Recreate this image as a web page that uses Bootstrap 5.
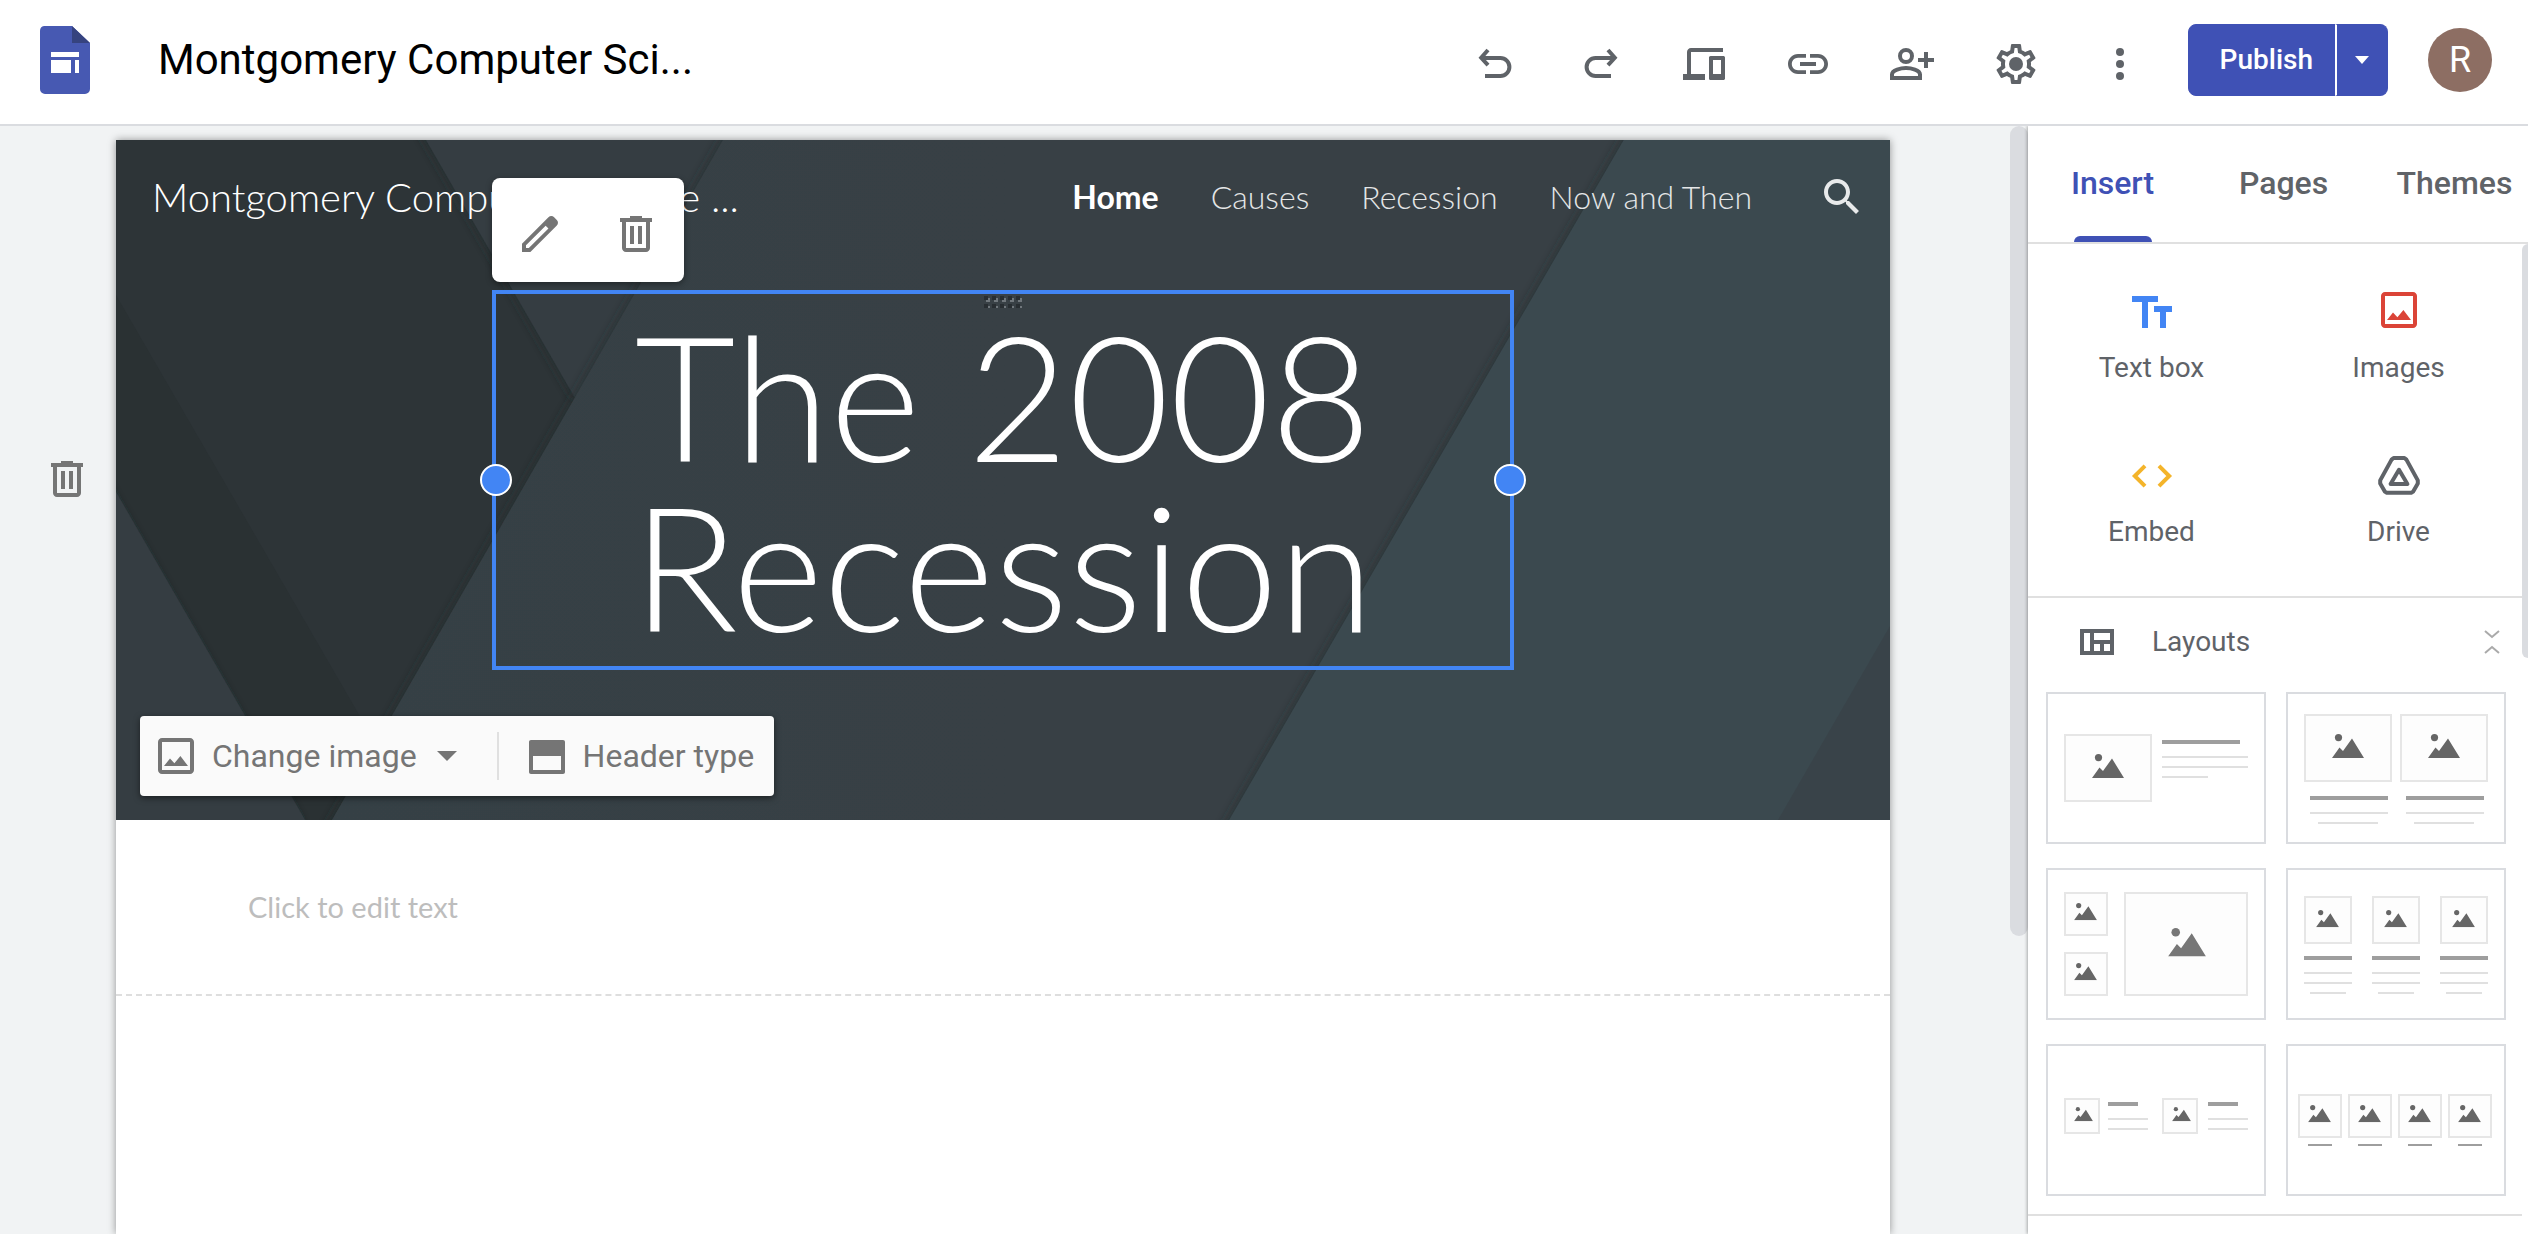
<!DOCTYPE html>
<html lang="en">
<head>
<meta charset="utf-8">
<meta name="viewport" content="width=device-width, initial-scale=1">
<title>Montgomery Computer Science - Site editor</title>
<link href="https://cdn.jsdelivr.net/npm/bootstrap@5.3.0/dist/css/bootstrap.min.css" rel="stylesheet">
<style>
  :root { --ink: #5f6368; --brand: #3f51b5; --line: #dadce0; --pick: #4285f4; }
  body { font-family: Roboto, "Liberation Sans", sans-serif; color: var(--ink); background: #f1f3f4; }
  .plain-btn { border: 0; background: none; padding: 0; color: inherit; display: inline-flex; align-items: center; justify-content: center; }
  .ico { width: 48px; height: 48px; fill: currentColor; flex: none; display: block; }
  .ico .ln, .ln { fill: none; stroke: currentColor; stroke-width: 2; }
  .tint-blue { color: #4285f4; } .tint-red { color: #db4437; } .tint-amber { color: #f4b42a; } .tint-grey { color: #aaa; } .tint-light { color: #e8eaeb; }

  .app-bar { height: 126px; background: #fff; border-bottom: 2px solid var(--line); padding: 0 36px 4px 40px; }
  .app-logo { width: 50px; height: 68px; display: block; }
  .doc-name { font-size: 42px; line-height: 48px; color: #000; margin-left: 68px; }
  .app-tools { gap: 56px; margin-right: 44px; padding-top: 8px; }
  .publish .btn { --bs-btn-bg: #3f51b5; --bs-btn-border-color: #3f51b5; --bs-btn-color: #fff; --bs-btn-border-radius: 8px; height: 72px; font-size: 28px; font-weight: 500; line-height: 32px; padding: 0 22px 0 31px; }
  .publish .btn + .btn { padding: 0 18px; border-left: 2px solid #fff; }
  .avatar { width: 64px; height: 64px; background: #8d6e63; color: #fff; font-size: 36px; line-height: 64px; margin-left: 40px; }

  .gutter-left { width: 116px; padding: 329px 25px 0 0; color: #757575; text-align: right; }
  .gutter-right { width: 120px; }
  .site-page { background: #fff; margin-top: 14px; box-shadow: 0 0 8px rgba(0,0,0,.4); font-family: Lato, "Liberation Sans", sans-serif; }
  .rail { width: 18px; }
  .rail-thumb { height: 810px; border-radius: 9px; background: var(--line); }

  .hero { color: #fff; height: 680px; background: #2d3437; }
  .hero-art { position: absolute; inset: 0; width: 100%; height: 100%; }
  .hero-nav { height: 114px; padding: 0 24px 0 36px; }
  .site-name { font-size: 40px; font-weight: 300; line-height: 48px; }
  .hero-links { gap: 52px; margin-right: 66px; font-size: 32px; font-weight: 300; line-height: 40px; }
  .hero-links a { color: #e4e6e7; text-decoration: none; }
  .hero-links a.current { color: #fff; font-weight: 700; }
  .picked { width: 1022px; max-width: 100%; margin: 36px auto 0; border: 4px solid var(--pick); padding: 16px 40px; }
  .picked h1 { font-size: 174px; line-height: 170px; font-weight: 300; }
  .knob { position: absolute; top: 50%; width: 32px; height: 32px; border-radius: 50%; background: var(--pick); border: 2px solid #fff; transform: translate(-50%,-50%); }
  .knob-l { left: 0; } .knob-r { left: 100%; }
  .grip { position: absolute; top: 2px; left: 50%; width: 38px; height: 12px; transform: translateX(-50%); }
  .float-tools { position: absolute; left: -4px; bottom: calc(100% + 12px); width: 192px; height: 104px; padding-top: 8px; background: #fff; border-radius: 8px; color: #757575; box-shadow: 0 2px 6px rgba(0,0,0,.4); }
  .hero-tools { position: absolute; left: 24px; bottom: 24px; height: 80px; background: #fafafa; border-radius: 4px; color: #757575; box-shadow: 0 2px 6px rgba(0,0,0,.5); padding: 0 20px 0 12px; font-family: Roboto, sans-serif; font-size: 32px; line-height: 40px; }
  .hero-tools .vr-line { width: 2px; height: 48px; background: #e0e0e0; margin: 0 24px 0 40px; }
  .hero-tools .gap-txt { gap: 12px; }
  .text-slot { height: 176px; border-bottom: 2px dashed #dedede; padding-left: 132px; font-size: 29px; line-height: 40px; color: #bdbdbd; }

  .side { width: 500px; background: #fff; box-shadow: -1px 0 3px rgba(0,0,0,.3); }
  .side-tabs { height: 118px; border-bottom: 2px solid #e0e0e0; }
  .side-tabs .nav-link { width: 171px; padding: 0 2px 2px 0; color: var(--ink); font-size: 32px; font-weight: 500; line-height: 40px; border-radius: 0; display: flex; align-items: center; justify-content: center; position: relative; flex: none; }
  .side-tabs .nav-link.active { color: var(--brand); }
  .side-tabs .nav-link.active::after { content: ""; position: absolute; bottom: 0; left: 46px; right: 47px; height: 6px; background: var(--brand); border-radius: 6px 6px 0 0; }
  .side-thumb { position: absolute; right: 0; top: 0; width: 6px; height: 414px; border-radius: 6px 0 0 6px; background: var(--line); }
  .side-scroll { padding-right: 6px; }
  .insert-grid { padding: 14px 0 10px; border-bottom: 2px solid #e0e0e0; }
  .insert-item { height: 164px; padding-top: 30px; flex-direction: column; justify-content: flex-start; gap: 12px; font-size: 28px; line-height: 40px; width: 100%; }
  .layouts-head { height: 88px; padding: 0 22px 0 52px; font-size: 28px; line-height: 40px; width: 100%; }
  .layouts-head .head-text { margin-left: 38px; }
  .layout-grid { display: grid; grid-template-columns: 1fr 1fr; gap: 24px 20px; padding: 6px 16px 18px 18px; border-bottom: 2px solid #e0e0e0; }
  .layout-grid svg { display: block; width: 100%; height: 152px; }
  .frm { fill: #fdfdfd; stroke: #e6e6e6; stroke-width: 2; }
  .bar { fill: #9e9e9e; } .thin { fill: #e0e0e0; }
</style>
</head>
<body>
<svg width="0" height="0" class="position-absolute" aria-hidden="true">
  <symbol id="trash" viewBox="0 0 24 24"><path d="M15 4V3H9v1H4v2h1v13c0 1.100.9 2 2 2h10c1.100 0 2-.9 2-2V6h1V4h-5zm2 15H7V6h10v13zM9 8h2v9H9zm4 0h2v9h-2z"/></symbol>
  <symbol id="pic" viewBox="0 0 24 24"><path d="M19 5v14H5V5h14m0-2H5c-1.100 0-2 .9-2 2v14c0 1.100.9 2 2 2h14c1.100 0 2-.9 2-2V5c0-1.100-.9-2-2-2z"/><path d="M6 17l3-3.800 2.200 2.400L14.200 12 18 17z"/></symbol>
  <symbol id="hill" viewBox="0 0 32 24"><circle cx="6.500" cy="3.600" r="3.600"/><path d="M0 24l7.500-10.500L11 17l9-12.500L32 24z"/></symbol>
</svg>

<div class="d-flex flex-column vh-100 overflow-hidden">
  <header class="app-bar d-flex align-items-center">
    <a href="#" aria-label="Sites home"><svg class="app-logo" viewBox="0 0 50 68"><path fill="#4759b2" d="M4 0h28l18 17v46a5 5 0 0 1-5 5H5a5 5 0 0 1-5-5V5a5 5 0 0 1 4-5z"/><path fill="#36437f" d="M32 0l18 17H32z"/><path fill="#fff" d="M11 26h28v5H11zM11 34h20v13H11zM35 34h4v13h-4z"/></svg></a>
    <div class="doc-name text-nowrap me-auto">Montgomery Computer Sci...</div>
    <div class="app-tools d-flex">
      <button class="plain-btn" aria-label="Undo"><svg class="ico" viewBox="0 0 24 24"><path class="ln" d="M8 5L4.600 8.900 8 12.600M5 9h9.200a4.500 4.500 0 0 1 0 9H6.500"/></svg></button>
      <button class="plain-btn" aria-label="Redo"><svg class="ico" viewBox="0 0 24 24"><path class="ln" d="M16 5l3.400 3.900L16 12.600M19 9H9.800a4.500 4.500 0 0 0 0 9h7.700"/></svg></button>
      <button class="plain-btn" aria-label="Preview"><svg class="ico" viewBox="0 0 24 24"><path fill-rule="evenodd" d="M5.500 6h16V4h-16c-1.100 0-2 .9-2 2v11h-2v3h11v-3h-7zM21.700 8h-6.400c-.5 0-.8.4-.8.8v10.400c0 .5.400.8.8.8h6.400c.5 0 .8-.4.8-.8V8.800c0-.5-.4-.8-.8-.8zm-1.200 9h-4v-7h4z"/></svg></button>
      <button class="plain-btn" aria-label="Copy link"><svg class="ico" viewBox="0 0 24 24"><path d="M3.900 12c0-1.710 1.390-3.100 3.100-3.100h4V7H7c-2.760 0-5 2.240-5 5s2.240 5 5 5h4v-1.900H7c-1.710 0-3.100-1.390-3.100-3.100zM8 13h8v-2H8v2zm9-6h-4v1.900h4c1.710 0 3.100 1.390 3.100 3.100s-1.390 3.100-3.100 3.100h-4V17h4c2.760 0 5-2.240 5-5s-2.240-5-5-5z"/></svg></button>
      <button class="plain-btn" aria-label="Share"><svg class="ico" viewBox="0 0 24 24"><circle class="ln" cx="9" cy="8" r="3"/><path class="ln" d="M2 19v-1.800C2 15 6.500 14 9 14s7 1 7 3.200V19zM19 6v8M15 10h8"/></svg></button>
      <button class="plain-btn" aria-label="Settings"><svg class="ico" viewBox="0 0 24 24"><path d="M19.430 12.980c.04-.32.07-.64.07-.98 0-.34-.03-.66-.07-.98l2.110-1.650c.19-.15.24-.42.12-.64l-2-3.460c-.09-.16-.26-.25-.44-.25-.06 0-.12.010-.17.030l-2.490 1c-.52-.4-1.080-.73-1.690-.98l-.38-2.650C14.460 2.180 14.250 2 14 2h-4c-.25 0-.46.18-.49.42l-.38 2.650c-.61.25-1.170.59-1.690.98l-2.490-1c-.06-.02-.12-.03-.18-.03-.17 0-.34.09-.43.25l-2 3.460c-.13.22-.07.49.12.64l2.110 1.650c-.04.32-.07.65-.07.98 0 .33.030.66.070.98l-2.110 1.650c-.19.15-.24.42-.12.64l2 3.460c.09.16.26.25.44.25.06 0 .12-.01.17-.03l2.490-1c.52.4 1.080.73 1.690.98l.38 2.650c.03.24.24.42.49.42h4c.25 0 .46-.18.49-.42l.38-2.650c.61-.25 1.170-.59 1.690-.98l2.490 1c.06.02.12.03.18.03.17 0 .34-.09.43-.25l2-3.460c.12-.22.07-.49-.12-.64l-2.110-1.650zm-1.980-1.710c.04.31.05.52.05.73 0 .21-.02.43-.05.73l-.14 1.130.89.7 1.080.84-.7 1.210-1.270-.51-1.040-.42-.9.68c-.43.32-.84.56-1.250.73l-1.060.43-.16 1.130-.2 1.350h-1.400l-.19-1.350-.16-1.130-1.060-.43c-.43-.18-.83-.41-1.230-.71l-.91-.7-1.060.43-1.270.51-.7-1.210 1.080-.84.89-.7-.14-1.130c-.03-.31-.05-.54-.05-.74s.02-.43.05-.73l.14-1.130-.89-.7-1.080-.84.7-1.210 1.270.51 1.040.42.9-.68c.43-.32.84-.56 1.250-.73l1.060-.43.16-1.130.2-1.350h1.390l.19 1.350.16 1.130 1.060.43c.43.18.83.41 1.230.71l.91.7 1.060-.43 1.270-.51.7 1.210-1.070.85-.89.7.14 1.130z"/><circle cx="12" cy="12" r="3.500"/></svg></button>
      <button class="plain-btn" aria-label="More"><svg class="ico" viewBox="0 0 24 24"><circle cx="12" cy="6" r="2"/><circle cx="12" cy="12" r="2"/><circle cx="12" cy="18" r="2"/></svg></button>
    </div>
    <div class="btn-group publish">
      <button class="btn">Publish</button>
      <button class="btn" aria-label="Publish options"><svg width="14" height="8" viewBox="0 0 14 8" class="d-block"><path fill="#fff" d="M0 0h14L7 8z"/></svg></button>
    </div>
    <button class="plain-btn avatar rounded-circle" aria-label="Account">R</button>
  </header>

  <div class="d-flex flex-grow-1 overflow-hidden">
    <div class="gutter-left flex-shrink-0"><button class="plain-btn" aria-label="Delete section"><svg class="ico"><use href="#trash"/></svg></button></div>
    <main class="site-page flex-grow-1">
      <section class="hero position-relative">
        <svg class="hero-art" viewBox="0 0 1774 680" preserveAspectRatio="none" aria-hidden="true">
          <defs><filter id="sh" x="-10%" y="-10%" width="120%" height="120%"><feDropShadow dx="-3" dy="0" stdDeviation="5" flood-color="#202528" flood-opacity=".5"/></filter>
          <linearGradient id="mid" x1="0" x2="1"><stop offset="0" stop-color="#363f44"/><stop offset="1" stop-color="#383f45"/></linearGradient></defs>
          <path fill="#2a3133" d="M0 155L260 604 216 680H189L0 352z"/>
          <path fill="#343c42" filter="url(#sh)" d="M-40 283L0 352 189 680V720H-40z"/>
          <path fill="#343c42" filter="url(#sh)" d="M287-40L310 0 459 258 640 260 700-40z"/>
          <path fill="url(#mid)" filter="url(#sh)" d="M630-40L193 720H1300L1600-40z"/>
          <path fill="#3b4950" filter="url(#sh)" d="M1531-40L1090 720H1900V-40z"/>
          <path fill="#394349" d="M1774 486L1662 680H1774z"/>
        </svg>
        <nav class="hero-nav position-relative d-flex align-items-center" aria-label="Site">
          <div class="site-name text-nowrap me-auto">Montgomery Computer Science ...</div>
          <div class="hero-links d-flex text-nowrap"><a class="current" href="#">Home</a><a href="#">Causes</a><a href="#">Recession</a><a href="#">Now and Then</a></div>
          <button class="plain-btn tint-light" aria-label="Search"><svg class="ico" viewBox="0 0 24 24"><path d="M15.500 14h-.79l-.28-.27C15.410 12.590 16 11.110 16 9.500 16 5.910 13.090 3 9.500 3S3 5.910 3 9.500 5.910 16 9.500 16c1.610 0 3.090-.59 4.230-1.570l.27.28v.79l5 4.990L20.490 19l-4.990-5zm-6 0C7.010 14 5 11.990 5 9.500S7.010 5 9.500 5 14 7.010 14 9.500 11.990 14 9.500 14z"/></svg></button>
        </nav>
        <div class="picked position-relative">
          <svg class="grip" viewBox="0 0 38 12" aria-hidden="true"><defs><pattern id="gp" width="8" height="8" patternUnits="userSpaceOnUse"><path fill="#70777c" d="M2 2h4v4H2z"/><path fill="#282e32" d="M0 0h4v4H0z"/></pattern></defs><path fill="url(#gp)" d="M0 0h38v12H0z"/></svg>
          <h1 class="text-center m-0">The 2008<br>Recession</h1>
          <span class="knob knob-l"></span><span class="knob knob-r"></span>
          <div class="float-tools d-flex align-items-center justify-content-around">
            <button class="plain-btn" aria-label="Edit"><svg class="ico" viewBox="0 0 24 24"><path d="M20.410 4.940l-1.350-1.350c-.78-.78-2.050-.78-2.830 0L3 16.820V21h4.180L20.410 7.770c.79-.78.79-2.050 0-2.830zm-14 14.120L5 19v-1.360l9.820-9.820 1.410 1.410-9.820 9.830z"/></svg></button>
            <button class="plain-btn" aria-label="Delete"><svg class="ico"><use href="#trash"/></svg></button>
          </div>
        </div>
        <div class="hero-tools d-flex align-items-center text-nowrap">
          <button class="plain-btn gap-txt"><svg class="ico"><use href="#pic"/></svg>Change image<svg class="ms-2" width="20" height="10" viewBox="0 0 20 10" fill="currentColor"><path d="M0 0h20L10 10z"/></svg></button>
          <span class="vr-line"></span>
          <button class="plain-btn gap-txt"><svg class="ico" viewBox="0 0 24 24"><path fill-rule="evenodd" d="M4 4h16c.6 0 1 .4 1 1v15c0 .6-.4 1-1 1H4c-.6 0-1-.4-1-1V5c0-.6.400-1 1-1zM5 12v7h14v-7z"/></svg>Header type</button>
        </div>
      </section>
      <section class="text-slot d-flex align-items-center">Click to edit text</section>
    </main>
    <div class="gutter-right flex-shrink-0"></div>
    <div class="rail flex-shrink-0"><div class="rail-thumb"></div></div>

    <aside class="side flex-shrink-0 d-flex flex-column position-relative">
      <nav class="side-tabs nav flex-nowrap overflow-hidden flex-shrink-0">
        <a class="nav-link active" href="#">Insert</a><a class="nav-link" href="#">Pages</a><a class="nav-link" href="#">Themes</a>
      </nav>
      <div class="side-scroll position-relative">
        <div class="side-thumb"></div>
        <div class="insert-grid row g-0">
          <div class="col-6"><button class="plain-btn insert-item"><svg class="ico tint-blue" viewBox="0 0 24 24"><path d="M2 4h13v3h-5v13H7V7H2zM13 9h9v3h-3v8h-3v-8h-3z"/></svg>Text box</button></div>
          <div class="col-6"><button class="plain-btn insert-item"><svg class="ico tint-red" viewBox="0 1 24 24"><use href="#pic" width="24" height="24"/></svg>Images</button></div>
          <div class="col-6"><button class="plain-btn insert-item"><svg class="ico tint-amber" viewBox="0 0 24 24"><path class="ln" d="M8.500 6.900L3.400 12l5.100 5.100M15.500 6.900l5.100 5.100-5.100 5.100"/></svg>Embed</button></div>
          <div class="col-6"><button class="plain-btn insert-item"><svg class="ico" viewBox="0 0 24 24"><path class="ln" stroke-linejoin="round" d="M9.300 3h5.400l1 .8 5.700 10.400v1.600l-2.300 4-1 .6H5.900l-1-.6-2.300-4v-1.600L8.300 3.800zM12 8.900L16.200 16H7.800z"/></svg>Drive</button></div>
        </div>
        <button class="plain-btn layouts-head justify-content-start">
          <svg width="34" height="26" viewBox="0 0 34 26" fill="currentColor"><path fill-rule="evenodd" d="M0 0h34v26H0zM4 4v18h6V4zM14 4v7h16V4zM14 15v7h6v-7zM24 15v7h6v-7z"/></svg>
          <span class="head-text me-auto">Layouts</span>
          <svg class="tint-grey" width="16" height="26" viewBox="0 0 16 26"><path class="ln" d="M1 2l7 6 7-6M1 24l7-6 7 6"/></svg>
        </button>
        <div class="layout-grid" id="layouts"></div>
      </div>
    </aside>
  </div>
</div>
<script src="https://cdn.jsdelivr.net/npm/bootstrap@5.3.0/dist/js/bootstrap.bundle.min.js"></script>
<script>
  // Each thumbnail: f = picture frame, hill = mountain glyph, b = rectangle with a class
  const f = (x, y, w, h) => `<rect class="frm" x="${x + 1}" y="${y + 1}" width="${w - 2}" height="${h - 2}"/>`;
  const hill = (x, y, w, c = '#666') => `<use href="#hill" x="${x}" y="${y}" width="${w}" height="${w * .75}" fill="${c}"/>`;
  const b = (k, x, y, w, h = 2) => `<rect class="${k}" x="${x}" y="${y}" width="${w}" height="${h}"/>`;
  const each = (xs, fn) => xs.map(fn).join('');
  const thumbs = [
    ['Image and text', f(18, 42, 88, 68) + hill(46, 62, 32) + b('bar', 116, 48, 78, 4) + b('thin', 116, 64, 86) + b('thin', 116, 74, 86) + b('thin', 116, 84, 46)],
    ['Two columns', each([18, 114], x => f(x, 22, 88, 68) + hill(x + 28, 42, 32) + b('bar', x + 6, 104, 78, 4) + b('thin', x + 6, 120, 78) + b('thin', x + 14, 130, 60))],
    ['Collage', each([24, 84], y => f(18, y, 44, 44) + hill(28, y + 11, 23)) + f(78, 24, 124, 104) + hill(122, 60, 38, '#777')],
    ['Three columns', each([18, 86, 154], x => f(x, 28, 48, 48) + hill(x + 12, 42, 23) + b('bar', x, 88, 48, 4) + b('thin', x, 104, 48) + b('thin', x, 114, 48) + b('thin', x + 6, 124, 36))],
    ['Two small images', each([[18, 62], [116, 162]], ([x, t]) => f(x, 54, 36, 36) + hill(x + 10, 63, 19) + b('bar', t, 58, 30, 4) + b('thin', t, 74, 40) + b('thin', t, 84, 40))],
    ['Four columns', each([12, 62, 112, 162], x => f(x, 50, 44, 44) + hill(x + 10, 61, 23) + b('bar', x + 10, 100, 24))]
  ];
  document.getElementById('layouts').innerHTML = thumbs.map(([n, s]) =>
    `<button class="plain-btn" aria-label="${n}"><svg viewBox="0 0 220 152"><rect x="1" y="1" width="218" height="150" fill="#fff" stroke="#dadce0" stroke-width="2"/>${s}</svg></button>`).join('');
</script>
</body>
</html>
